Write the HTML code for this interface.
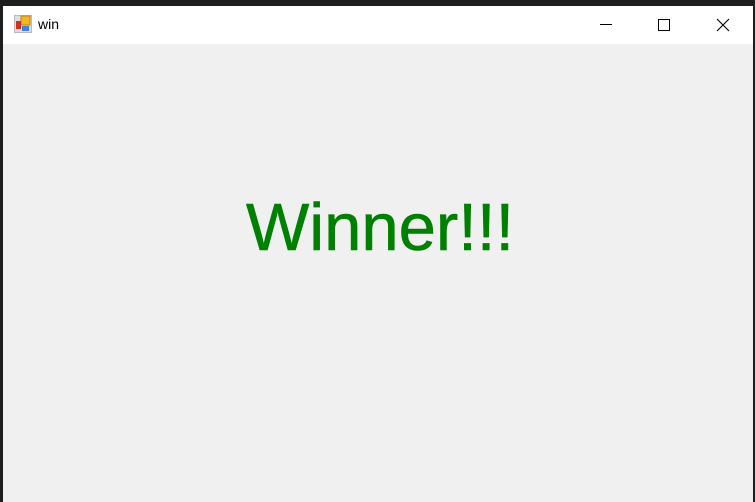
<!DOCTYPE html>
<html><head><style>
html,body{margin:0;padding:0;width:755px;height:502px;overflow:hidden;background:#1e1e1e;font-family:"Liberation Sans",Arial,sans-serif}
.win{position:absolute;left:3px;top:6px;width:750px;height:496px;background:#f0f0f0}
.tb{position:absolute;left:0;top:0;width:750px;height:38px;background:#fff}
.title{position:absolute;left:35px;top:10px;font-size:14px;color:#000}
.txt{position:absolute;left:243px;top:188px;font-size:67px;line-height:68px;color:#008000;white-space:nowrap;-webkit-text-stroke:0.6px #008000}
</style></head><body>
<div class="win">
<div class="tb">
<svg style="position:absolute;left:11px;top:9px" width="18" height="18" viewBox="0 0 18 18">
<rect x="0.5" y="0.5" width="17" height="17" fill="#ddd" stroke="#bbb"/>
<rect x="7" y="1" width="9" height="9" fill="#f0b820" stroke="#c08010"/>
<rect x="2" y="6" width="5" height="8" fill="#d03020"/>
<rect x="8" y="11" width="7" height="5" fill="#4080e0"/>
</svg>
<div class="title">win</div>
<svg style="position:absolute;left:590px;top:11px" width="140" height="16">
<line x1="7" y1="7.5" x2="19" y2="7.5" stroke="#000"/>
<rect x="65.5" y="2.5" width="11" height="11" fill="none" stroke="#000"/>
<path d="M124 2 L136 14 M136 2 L124 14" stroke="#000" stroke-width="1.1"/>
</svg>
</div>
<div class="txt">Winner!!!</div>
</div>
</body></html>
